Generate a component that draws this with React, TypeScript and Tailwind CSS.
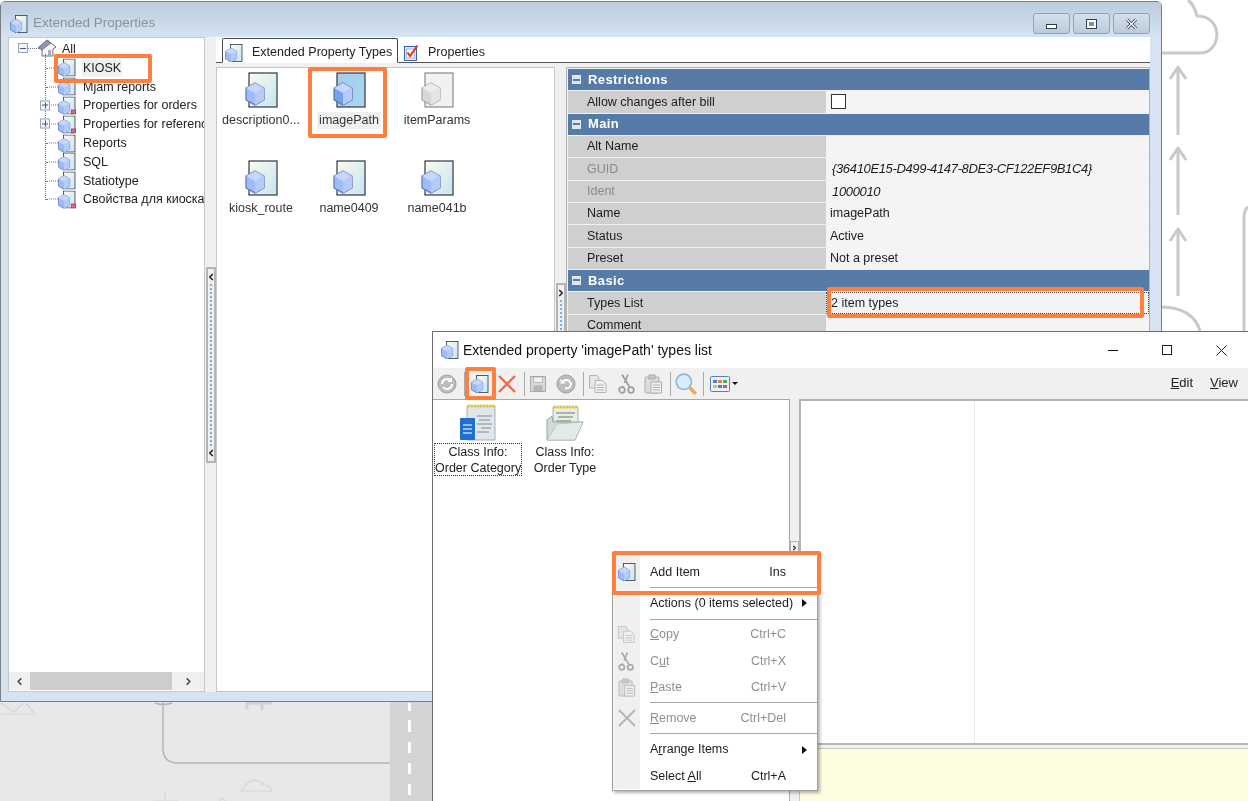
import { ChevronLeft, ChevronRight } from "lucide-react";

const ORANGE = "absolute border-[4px] border-[#ff7f3f] rounded-[2px] pointer-events-none";

const DocCube = ({ selected, gray, flag, size = 18 }: { selected?: boolean; gray?: boolean; flag?: boolean; size?: number }) => {
  const small = size <= 18;
  return (
    <svg width={size} height={size} viewBox="0 0 18 18" className="shrink-0">
      <rect x={small ? 5.5 : 3} y="0.5" width={small ? 11.5 : 14} height="17" fill={selected ? "url(#docSel)" : gray ? "#f1f1f1" : "url(#docFill)"} stroke={gray ? "#8a8a8a" : "#2f3b42"} strokeWidth={small ? 0.8 : 0.6} />
      <g transform={small ? "translate(-1.5 -2.75) scale(1.25)" : undefined}>
        <path d="M6 5.5 L10.5 8 L10.5 14 L6 16.5 L1.5 14 L1.5 8 Z" fill={selected ? "#6ea2ea" : gray ? "#d8d8d8" : "#9dbbf7"} stroke={gray ? "#a5a5a5" : "#5d74b5"} strokeWidth="0.6" />
        <path d="M6 5.5 L10.5 8 L6 10.5 L1.5 8 Z" fill={gray ? "#ececec" : "#c6d7fb"} />
        <path d="M6 10.5 L10.5 8 L10.5 14 L6 16.5 Z" fill={gray ? "#e4e4e4" : "#b4cbfa"} />
      </g>
      {flag && <rect x="13.5" y="13.5" width="4" height="4" fill="#ff5a6a" stroke="#2f62a8" strokeWidth="0.8" />}
    </svg>
  );
};

const House = () => (
  <svg width="20" height="20" viewBox="0 0 20 20" className="shrink-0">
    <path d="M1 10 L10 2 L19 9 L16 11 L16 18 L5 18 L5 11 Z" fill="#f7f7f7" stroke="#6c6f78" strokeWidth="1" />
    <path d="M1 10 L10 2 L14 5 L5 12 Z" fill="#8d94b8" stroke="#5d6178" strokeWidth="0.6" />
    <rect x="11" y="12" width="3" height="6" fill="#a8acb8" />
  </svg>
);

const CopyIcon = ({ size = 20, color = "#b4b4b4" }: { size?: number; color?: string }) => (
  <svg width={size} height={size} viewBox="0 0 20 20">
    <path d="M1.5 1.5H9L11 4V14H1.5Z" fill="#e6e6e6" stroke={color} />
    <path d="M7 6.5H14.5L18 10V18.5H7Z" fill="#f0f0f0" stroke={color} />
    <path d="M9 11H16M9 13.5H16M9 16H16" stroke={color} />
  </svg>
);

const ScissorsIcon = ({ size = 20, color = "#a0a0a0" }: { size?: number; color?: string }) => (
  <svg width={size} height={size} viewBox="0 0 20 20">
    <path d="M5 0.5L12.5 13M11 0.5L7.5 9M6 12L5.5 13" stroke={color} strokeWidth="1.8" fill="none" />
    <circle cx="5" cy="16" r="2.8" fill="none" stroke={color} strokeWidth="1.8" />
    <circle cx="14" cy="16" r="2.8" fill="none" stroke={color} strokeWidth="1.8" />
  </svg>
);

const PasteIcon = ({ size = 20, color = "#aeaeae" }: { size?: number; color?: string }) => (
  <svg width={size} height={size} viewBox="0 0 20 20">
    <rect x="2" y="3" width="14" height="16" rx="1" fill="#dcdcdc" stroke={color} />
    <rect x="6" y="1" width="6" height="4" fill="#c8c8c8" stroke={color} />
    <path d="M8 8H18.5V19H8Z" fill="#f0f0f0" stroke={color} />
    <path d="M10 11H17M10 13.5H17M10 16H17" stroke={color} />
  </svg>
);

const PlusBox = ({ minus }: { minus?: boolean }) => (
  <span className="flex shrink-0 w-[10px] h-[10px] items-center justify-center border border-[#9aa3b5] bg-[#f4f5f9] relative">
    <span className="w-[6px] h-px bg-[#3f5a8a]" />
    {!minus && <span className="absolute w-px h-[6px] bg-[#3f5a8a]" />}
  </span>
);

const treeItems = [
  { name: "KIOSK", selected: true },
  { name: "Mjam reports" },
  { name: "Properties for orders", plus: true, flag: true },
  { name: "Properties for references", plus: true, flag: true },
  { name: "Reports" },
  { name: "SQL" },
  { name: "Statiotype" },
  { name: "Свойства для киоска", flag: true },
];

const Tree = () => (
  <div className="relative w-[197px] h-full bg-white border border-[#c4c8cc] overflow-hidden">
    <div className="absolute left-[36px] top-[16px] h-[146px] border-l border-dotted border-[#777]" />
    <div className="flex items-center h-[19px] mt-[1px] pl-[9px] pb-px">
      <PlusBox minus />
      <span className="w-[9px] border-t border-dotted border-[#777]" />
      <House />
      <span className="ml-[5px] mt-[2px] text-[12.5px] text-[#222]">All</span>
    </div>
    {treeItems.map((it) => (
      <div key={it.name} className="relative flex items-center h-[18.8px] pl-[37px] whitespace-nowrap translate-y-[0.5px]">
        {it.plus && (
          <span className="absolute left-[31px] top-[4px]">
            <PlusBox />
          </span>
        )}
        <span className="w-[12px] shrink-0 border-t border-dotted border-[#777]" />
        <DocCube flag={it.flag} />
        <span className={`ml-[6px] px-px shrink-0 text-[12.5px] leading-[17px] text-[#222] ${it.selected ? "bg-[#f0f0f0]" : ""}`}>{it.name}</span>
      </div>
    ))}
    <div className="absolute left-0 right-0 bottom-px h-[18px] flex items-center bg-[#f0f0f0]">
      <span className="w-[21px] flex justify-center"><ChevronLeft size={11} strokeWidth={3.5} className="text-[#444]" /></span>
      <span className="w-[142px] h-full bg-[#cdcdcd]" />
      <span className="flex-1 flex justify-center"><ChevronRight size={11} strokeWidth={3.5} className="text-[#444]" /></span>
    </div>
  </div>
);

const Splitter = ({ handleTop, handleHeight, right }: { handleTop: number; handleHeight: number; right?: boolean }) => {
  const Chev = right ? ChevronRight : ChevronLeft;
  return (
    <div className="w-[11px] h-full bg-[#f0f0f0] flex flex-col items-center">
      <div style={{ marginTop: handleTop, height: handleHeight }} className="w-[10px] border-2 border-[#b4b4b4] bg-[#f0f0f0] flex flex-col items-center justify-between py-[3px]">
        <Chev size={10} strokeWidth={4} className="text-[#222] shrink-0" />
        <span className="flex-1 my-[2px] border-l-2 border-dotted border-[#6fb0ea]" />
        <Chev size={10} strokeWidth={4} className="text-[#222] shrink-0" />
      </div>
    </div>
  );
};

const typeItems = [
  { name: "description0..." },
  { name: "imagePath", selected: true },
  { name: "itemParams", gray: true },
  { name: "kiosk_route" },
  { name: "name0409" },
  { name: "name041b" },
];

const TypeList = () => (
  <div className="w-[339px] h-full bg-white border border-[#c4c8cc] grid grid-cols-[88px_88px_88px] auto-rows-[88px] content-start">
    {typeItems.map((it) => (
      <div key={it.name} className="flex flex-col items-center pt-[4px]">
        <DocCube size={36} selected={it.selected} gray={it.gray} />
        <span className={`mt-[4px] px-[2px] text-[12.5px] leading-[17px] text-[#333] whitespace-nowrap ${it.selected ? "bg-[#f0f0f0]" : ""}`}>{it.name}</span>
      </div>
    ))}
  </div>
);

const GroupRow = ({ title }: { title: string }) => (
  <div className="flex items-center h-[21px] mb-[1.33px] bg-[#567ba6]">
    <span className="ml-[4px] w-[9px] h-[9px] bg-[#dfe6ef] flex items-center justify-center">
      <span className="w-[7px] h-[2px] bg-[#567ba6]" />
    </span>
    <span className="ml-[7px] text-[13px] font-bold tracking-[0.4px] text-white">{title}</span>
  </div>
);

const PropRow = ({ label, value, muted, italic, focused, children }: { label: string; value?: string; muted?: boolean; italic?: boolean; focused?: boolean; children?: React.ReactNode }) => (
  <div className="grid grid-cols-[258px_1fr] h-[21.33px] mb-px">
    <div className={`flex items-center pl-[19px] bg-[#cfcfcf] text-[12.5px] ${muted ? "text-[#8a8a8a]" : "text-[#1c1c1c]"}`}>{label}</div>
    <div className={`flex items-center bg-[#f4f4f4] text-[12.5px] text-[#1c1c1c] ${italic ? "pl-[6px] italic text-[13px] tracking-[-0.35px]" : "pl-[4px]"} ${focused ? "border border-dotted border-[#444]" : ""}`}>
      {value}
      {children}
    </div>
  </div>
);

const PropGrid = () => (
  <div className="flex-1 h-full bg-[#f0f0f0] border border-[#aeb3b8] pl-[1px] pt-[1px] overflow-hidden">
    <GroupRow title="Restrictions" />
    <PropRow label="Allow changes after bill">
      <span className="ml-[1px] w-[15px] h-[15px] bg-white border border-[#333]" />
    </PropRow>
    <GroupRow title="Main" />
    <PropRow label="Alt Name" />
    <PropRow label="GUID" value="{36410E15-D499-4147-8DE3-CF122EF9B1C4}" muted italic />
    <PropRow label="Ident" value="1000010" muted italic />
    <PropRow label="Name" value="imagePath" />
    <PropRow label="Status" value="Active" />
    <PropRow label="Preset" value="Not a preset" />
    <GroupRow title="Basic" />
    <PropRow label="Types List" value="2 item types" focused />
    <PropRow label="Comment" />
  </div>
);

const BackWindow = () => (
  <div className="absolute left-0 top-px w-[1162px] h-[701px] rounded-t-[5px] border border-[#7b7f84] bg-[#d6e4f1] flex flex-col">
    <div className="flex items-center h-[35px] pt-[8px] pl-[9px] pr-[11px] bg-gradient-to-b from-[#bccbd9] to-[#d4e4f2]">
      <DocCube />
      <span className="ml-[5px] text-[13.5px] text-[#87939c]">Extended Properties</span>
      <div className="ml-auto flex gap-[3px]">
        {["min", "max", "close"].map((b) => (
          <span key={b} className="flex items-center justify-center w-[37px] h-[21px] rounded-[3px] border border-[#8fa2b6] bg-gradient-to-b from-[#d3e0ec] to-[#bccbdb]">
            {b === "min" && <span className="mt-[5px] w-[11px] h-[5px] border border-[#33404c] bg-white" />}
            {b === "max" && <span className="w-[11px] h-[10px] border border-[#33404c] bg-white p-[2px]"><span className="block w-full h-full bg-[#7f8d9c]" /></span>}
            {b === "close" && (
              <svg width="13" height="12" viewBox="0 0 13 12"><path d="M2 1.5 L11 10.5 M11 1.5 L2 10.5" stroke="#33404c" strokeWidth="3" /><path d="M2 1.5 L11 10.5 M11 1.5 L2 10.5" stroke="#fff" strokeWidth="1.4" /></svg>
            )}
          </span>
        ))}
      </div>
    </div>
    <div className="flex h-[655px] ml-[7px] mr-[11px] bg-[#f0f0f0]">
      <Tree />
      <Splitter handleTop={230} handleHeight={196} />
      <div className="flex-1 flex flex-col">
        <div className="flex items-end h-[26px] bg-white border-b border-[#555] pl-[6px]">
          <div className="flex items-center h-[25px] w-[176px] -mb-px pt-[4px] bg-white border border-b-white border-[#444] pl-[2px] rounded-t-[2px]">
            <DocCube />
            <span className="ml-[9px] text-[12.5px] text-[#222]">Extended Property Types</span>
          </div>
          <div className="flex items-center h-[25px] pl-[6px] pt-[5px]">
            <svg width="15" height="17" viewBox="0 0 15 17">
              <rect x="0.5" y="2.5" width="12" height="14" fill="#dce6f7" stroke="#3f62a8" />
              <rect x="2.5" y="5" width="8" height="9" fill="#fff" stroke="#7f94c0" strokeWidth="0.6" />
              <path d="M3.5 8.5 L6 12 L13.5 1.5" fill="none" stroke="#e53324" strokeWidth="2" />
            </svg>
            <span className="ml-[9px] text-[12.5px] text-[#222]">Properties</span>
          </div>
        </div>
        <div className="flex flex-1 mt-[4px] min-h-0">
          <TypeList />
          <Splitter handleTop={216} handleHeight={180} right />
          <PropGrid />
        </div>
      </div>
    </div>
  </div>
);

const ToolSep = ({ className }: { className: string }) => (
  <span className={`flex justify-center ${className}`}>
    <span className="w-px h-[24px] bg-[#a9a9a9]" />
  </span>
);

const GrayCircle = ({ undo }: { undo?: boolean }) => (
  <svg width="20" height="20" viewBox="0 0 20 20">
    <circle cx="10" cy="10" r="9" fill="#bcbcbc" stroke="#a0a0a0" />
    <path d={undo ? "M6 8 C8 5 14 5 15 10 C15 13 12 15 9 14" : "M5 10 A5 5 0 0 1 14 7 M15 10 A5 5 0 0 1 6 13"} fill="none" stroke="#fff" strokeWidth="2" />
    <path d={undo ? "M4 5 L5 10 L10 9 Z" : "M15 3 L15 8 L10 8 Z"} fill="#fff" />
  </svg>
);

const SaveIcon = () => (
  <svg width="18" height="18" viewBox="0 0 18 18">
    <path d="M1.5 1.5H16.5V16.5H1.5Z" fill="#d8d8d8" stroke="#a8a8a8" />
    <rect x="4.5" y="2" width="9" height="5.5" fill="#f2f2f2" stroke="#a8a8a8" strokeWidth="0.7" />
    <rect x="4.5" y="10.5" width="9" height="5.5" fill="#b5b5b5" />
  </svg>
);

const NotepadIcon = () => (
  <svg width="38" height="38" viewBox="0 0 38 38">
    <rect x="8" y="2" width="28" height="34" fill="#dfe7ec" stroke="#a7b0b6" />
    <path d="M9 2 H35" stroke="#e8c93a" strokeWidth="3" strokeDasharray="2 1" />
    <path d="M18 12 H33 M20 16 H31 M18 20 H33 M22 24 H32 M18 28 H30" stroke="#7f8a92" strokeWidth="1" />
    <rect x="1" y="14" width="15" height="22" rx="1" fill="#1e6fd2" />
    <path d="M4 21 H13 M4 25 H13 M4 29 H13" stroke="#bcd8fa" strokeWidth="1.6" />
  </svg>
);

const FolderIcon = () => (
  <svg width="40" height="38" viewBox="0 0 40 38">
    <path d="M8 3 H33 V20 H8 Z" fill="#e8eee4" stroke="#a7b0a6" />
    <path d="M9 3 H32" stroke="#e8c93a" strokeWidth="3" strokeDasharray="2 1" />
    <path d="M11 9 H30 M13 13 H28 M11 17 H26" stroke="#6f7a72" strokeWidth="1" />
    <path d="M2 36 L2 16 L7 12 L8 18 L24 18 L38 18 L30 36 Z" fill="#cfdcd8" stroke="#9aa5a3" />
    <path d="M2 36 L12 20 L38 18 L30 36 Z" fill="#e2ebe8" stroke="#aab4b2" strokeWidth="0.6" />
  </svg>
);

const MenuSep = ({ h }: { h: number }) => (
  <div className="flex" style={{ height: h }}>
    <span className="w-[27px] bg-[#f0f0f0]" />
    <span className="flex-1 flex items-center ml-[10px]">
      <span className="w-full h-px bg-[#a8a8a8]" />
    </span>
  </div>
);

const MenuRow = ({ h, icon, label, keyText, disabled, arrow }: { h: number; icon?: React.ReactNode; label: React.ReactNode; keyText?: string; disabled?: boolean; arrow?: boolean }) => (
  <div className={`flex items-center text-[12.5px] ${disabled ? "text-[#8f8f8f]" : "text-[#1c1c1c]"}`} style={{ height: h }}>
    <span className="w-[27px] h-full bg-[#f0f0f0] flex items-center justify-center">{icon}</span>
    <span className="ml-[10px] whitespace-nowrap">{label}</span>
    {keyText && <span className="ml-auto mr-[31px]">{keyText}</span>}
    {arrow && <span className="ml-auto mr-[10px] w-0 h-0 border-y-[4px] border-y-transparent border-l-[5px] border-l-[#111]" />}
  </div>
);

const ContextMenu = () => (
  <div className="absolute left-[612px] top-[553px] w-[206px] h-[238px] bg-white border border-[#a0a0a0] shadow-[2px_2px_3px_rgba(0,0,0,0.3)]">
    <div className="h-[5px] w-[27px] bg-[#f0f0f0]" />
    <MenuRow h={26} icon={<DocCube />} label="Add Item" keyText="Ins" />
    <MenuSep h={4} />
    <MenuRow h={28} label="Actions (0 items selected)" arrow />
    <MenuSep h={4} />
    <MenuRow h={27} disabled icon={<CopyIcon size={19} color="#c4c4c4" />} label={<><u>C</u>opy</>} keyText="Ctrl+C" />
    <MenuRow h={26} disabled icon={<ScissorsIcon size={19} color="#ababab" />} label={<>C<u>u</u>t</>} keyText="Ctrl+X" />
    <MenuRow h={26} disabled icon={<PasteIcon size={19} color="#bcbcbc" />} label={<><u>P</u>aste</>} keyText="Ctrl+V" />
    <MenuSep h={5} />
    <MenuRow
      h={26}
      disabled
      icon={<svg width="20" height="18" viewBox="0 0 20 18"><path d="M2 1 L18 17 M18 1 L2 17" stroke="#b5b5b5" strokeWidth="2" /></svg>}
      label={<><u>R</u>emove</>}
      keyText="Ctrl+Del"
    />
    <MenuSep h={5} />
    <MenuRow h={27} label={<>A<u>r</u>range Items</>} arrow />
    <MenuRow h={26} label={<>Select <u>A</u>ll</>} keyText="Ctrl+A" />
  </div>
);

const Slot = ({ className, children }: { className: string; children: React.ReactNode }) => (
  <span className={`flex items-center justify-center shrink-0 ${className}`}>{children}</span>
);

const FrontWindow = () => (
  <div className="absolute left-[432px] top-[331px] w-[816px] h-[470px] border-l border-t border-[#6f6f6f] bg-[#f0f0f0] flex flex-col">
    <div className="flex items-center h-[36px] shrink-0 pl-[8px] bg-white">
      <DocCube />
      <span className="ml-[4px] text-[14px] text-[#111]">Extended property 'imagePath' types list</span>
      <div className="ml-auto flex items-center">
        <span className="w-[10px] h-px bg-[#111] mr-[44px]" />
        <span className="w-[10px] h-[10px] border border-[#222] mr-[44px]" />
        <svg width="11" height="11" viewBox="0 0 11 11" className="mr-[21px]"><path d="M0.5 0.5 L10.5 10.5 M10.5 0.5 L0.5 10.5" stroke="#222" /></svg>
      </div>
    </div>
    <div className="flex items-center h-[31px] shrink-0">
      <Slot className="w-[28px]"><GrayCircle /></Slot>
      <ToolSep className="w-[6px]" />
      <Slot className="w-[26px]"><DocCube /></Slot>
      <Slot className="w-[28px]">
        <svg width="22" height="22" viewBox="0 0 22 22"><path d="M3 3 L19 19 M19 3 L3 19" stroke="#ee6a4c" strokeWidth="2.4" /></svg>
      </Slot>
      <ToolSep className="w-[6px]" />
      <Slot className="w-[22px]"><SaveIcon /></Slot>
      <Slot className="w-[34px]"><GrayCircle undo /></Slot>
      <ToolSep className="w-px" />
      <Slot className="w-[28px]"><CopyIcon /></Slot>
      <Slot className="w-[30px]"><ScissorsIcon /></Slot>
      <Slot className="w-[22px]"><PasteIcon /></Slot>
      <ToolSep className="w-[12px]" />
      <Slot className="w-[20px]">
        <svg width="24" height="24" viewBox="0 0 22 22" className="shrink-0">
          <circle cx="9" cy="9" r="7" fill="#d9eefc" stroke="#8fb5cf" strokeWidth="1.5" />
          <path d="M14 14 L20 20" stroke="#e8a65a" strokeWidth="3" />
        </svg>
      </Slot>
      <ToolSep className="w-[14px]" />
      <Slot className="w-[20px]">
        <svg width="20" height="16" viewBox="0 0 20 16">
          <rect x="0.5" y="0.5" width="19" height="15" rx="1" fill="#eaf1fb" stroke="#5b7fb5" />
          <rect x="3" y="4" width="4" height="3" fill="#4f7fd0" /><rect x="8" y="4" width="4" height="3" fill="#e0873a" /><rect x="13" y="4" width="4" height="3" fill="#57a84f" />
          <rect x="3" y="9" width="4" height="3" fill="#d9c23f" /><rect x="8" y="9" width="4" height="3" fill="#4f7fd0" /><rect x="13" y="9" width="4" height="3" fill="#c85a5a" />
        </svg>
      </Slot>
      <span className="ml-[2px] w-0 h-0 border-x-[3px] border-x-transparent border-t-[3px] border-t-[#111]" />
      <div className="ml-auto flex text-[13px] text-[#222] -mt-[2px]">
        <span className="mr-[17px]"><u>E</u>dit</span>
        <span className="mr-[10px]"><u>V</u>iew</span>
      </div>
    </div>
    <div className="flex flex-1 min-h-0">
      <div className="w-[357px] bg-white border-t border-r border-[#a8a8a8] flex items-start pt-[4px] text-[12.5px] leading-[16px] text-[#222] text-center">
        <div className="w-[88px] ml-px flex flex-col items-center">
          <NotepadIcon />
          <div className="mt-[1px] w-[88px] h-[33px] border border-dotted border-[#333] whitespace-nowrap">Class Info:<br />Order Category</div>
        </div>
        <div className="-ml-[1px] w-[88px] flex flex-col items-center">
          <FolderIcon />
          <div className="mt-[2px] whitespace-nowrap">Class Info:<br />Order Type</div>
        </div>
      </div>
      <div className="w-[9px] flex justify-center">
        <span className="mt-[142px] w-[9px] h-[14px] border border-[#b0b0b0] bg-[#f0f0f0] flex items-center justify-center">
          <ChevronRight size={8} strokeWidth={4} className="text-[#222]" />
        </span>
      </div>
      <div className="flex-1 flex flex-col">
        <div className="flex h-[344px] bg-white border-t-2 border-l-2 border-[#b0b5ba]">
          <span className="w-[174px] border-r border-[#eeeeee]" />
        </div>
        <div className="h-[5px] border-t-2 border-[#b4b8bc]" />
        <div className="flex-1 bg-[#fefde0] border-t border-l border-[#c8c8c8]" />
      </div>
    </div>
  </div>
);

const Backdrop = () => (
  <svg className="absolute inset-0" width="1248" height="801" viewBox="0 0 1248 801" fill="none">
    <defs>
      <linearGradient id="docFill" x1="0" y1="0" x2="1" y2="1">
        <stop offset="0" stopColor="#fbfbea" />
        <stop offset="1" stopColor="#c8e4f6" />
      </linearGradient>
      <linearGradient id="docSel" x1="0" y1="0" x2="1" y2="1">
        <stop offset="0" stopColor="#a5cdea" />
        <stop offset="1" stopColor="#acd5f0" />
      </linearGradient>
    </defs>
    <rect x="0" y="700" width="432" height="101" fill="#e7e8ea" />
    <rect x="390" y="700" width="42" height="101" fill="#d3d3d3" />
    <path d="M409.5 703V711M409.5 720V732M409.5 742V753M409.5 763V774M409.5 784V795" stroke="#fff" strokeWidth="3" />
    <path d="M163 702V748Q163 763 178 763H390" stroke="#b4b5b7" strokeWidth="1.5" />
    <path d="M0 703L14 712L24 703M0 714H35L26 703" stroke="#d5d6d8" strokeWidth="1.2" />
    <path d="M247 703V709M262 703V710M272 703L246 703" stroke="#cfd0d2" strokeWidth="3" />
    <path d="M155 703Q163 706 172 703" stroke="#b4b5b7" strokeWidth="1.5" />
    <path d="M241 791H272Q270 785 264 785Q258 778 250 781Q245 785 241 791Z" stroke="#d5d6d8" strokeWidth="1.2" />
    <path d="M165 791V801M153 801H178M219 801L222 798L226 801" stroke="#d5d6d8" strokeWidth="1.2" />
    <g stroke="#c8c9cb" strokeWidth="3" strokeLinejoin="round">
      <path d="M1162 53H1200C1222 53 1224 16 1197 16C1195 8 1192 3 1188 0" />
      <path d="M1178 135V67M1170 79L1178 67L1186 79" />
      <path d="M1178 215V148M1170 160L1178 148L1186 160" />
      <path d="M1178 296V229M1170 241L1178 229L1186 241" />
      <path d="M1162 307C1182 307 1196 316 1200 331" />
      <path d="M1244 331V218Q1244 210 1248 207" />
    </g>
  </svg>
);

export default function App() {
  return (
    <div className="relative w-[1248px] h-[801px] overflow-hidden bg-white blur-[0.35px] font-['Liberation_Sans',sans-serif]">
      <Backdrop />
      <BackWindow />
      <FrontWindow />
      <ContextMenu />
      <div className={`${ORANGE} left-[54px] top-[54px] w-[98px] h-[29px]`} />
      <div className={`${ORANGE} left-[308px] top-[67px] w-[79px] h-[71px]`} />
      <div className={`${ORANGE} left-[827px] top-[287px] w-[317px] h-[31px]`} />
      <div className={`${ORANGE} left-[465px] top-[367px] w-[31px] h-[33px]`} />
      <div className={`${ORANGE} left-[612px] top-[551px] w-[209px] h-[44px]`} />
    </div>
  );
}
